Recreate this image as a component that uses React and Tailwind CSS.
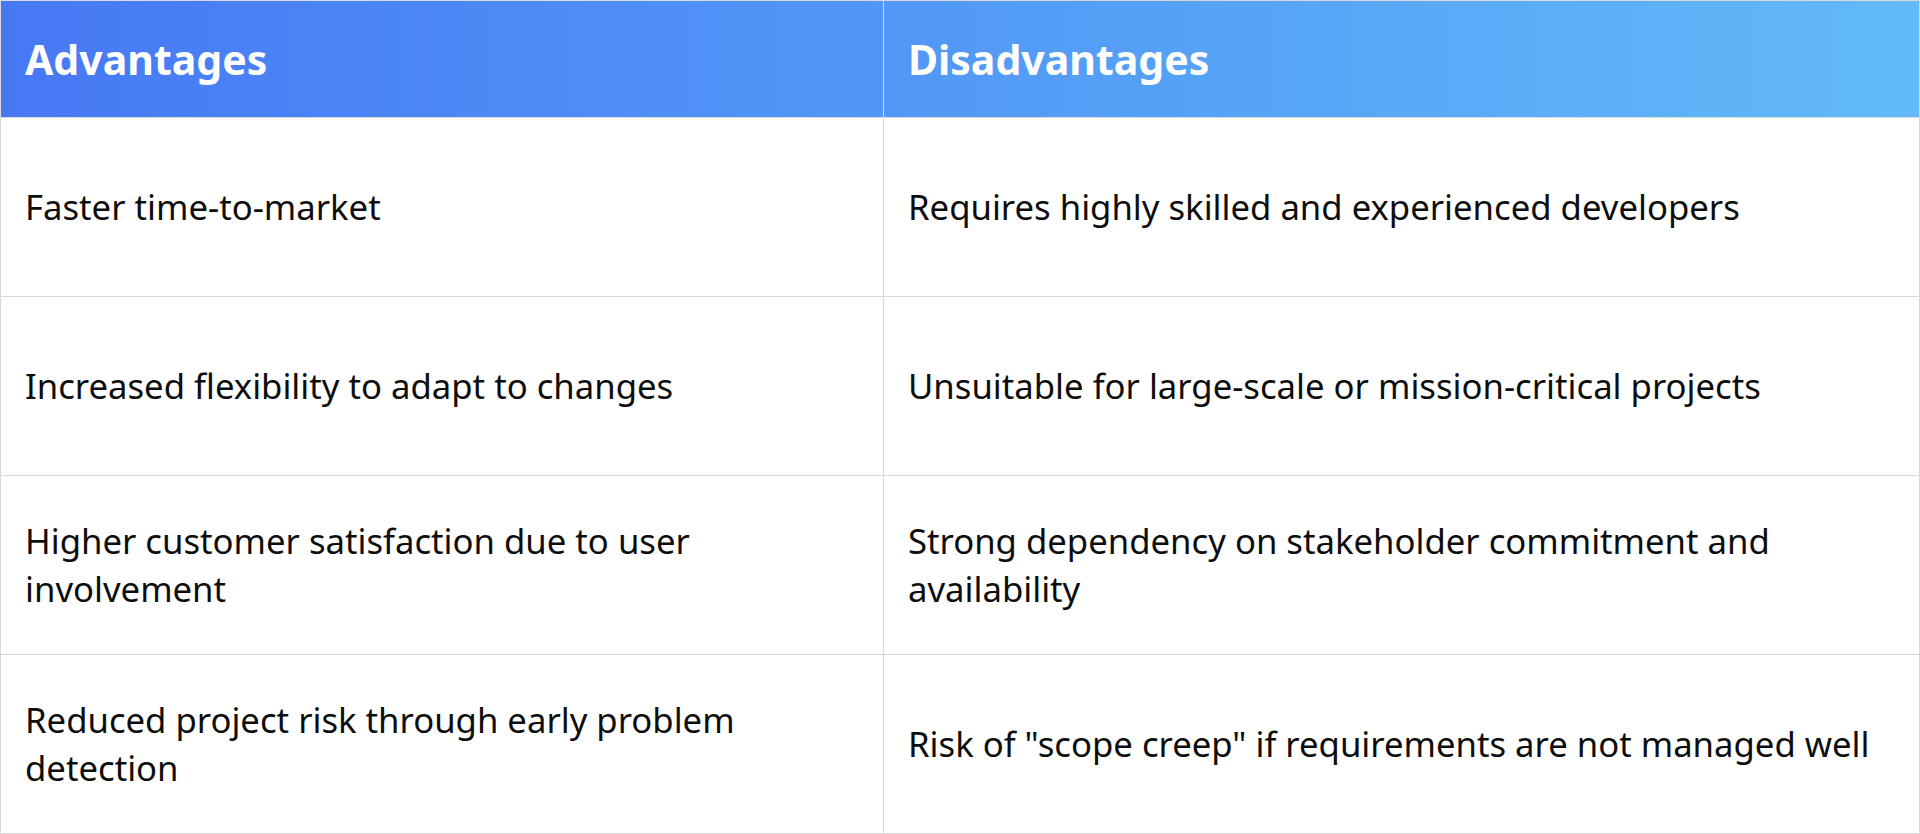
export default function App() {
  const rows = [
    ["Faster time-to-market", "Requires highly skilled and experienced developers"],
    ["Increased flexibility to adapt to changes", "Unsuitable for large-scale or mission-critical projects"],
    ["Higher customer satisfaction due to user involvement", "Strong dependency on stakeholder commitment and availability"],
    ["Reduced project risk through early problem detection", "Risk of \"scope creep\" if requirements are not managed well"],
  ];
  return (
    <div className="w-[1920px] h-[834px] bg-white font-['Noto_Sans',sans-serif]">
      <div className="h-full border border-[#d9d9d9] flex flex-col">
        <div className="h-[117px] shrink-0 flex bg-gradient-to-r from-[#4778f4] to-[#62baf8] border-b border-[#d9d9d9]">
          <div className="w-[883px] shrink-0 border-r border-[#d9d9d9] flex items-center px-6">
            <span className="text-[41px] font-bold text-white leading-none">Advantages</span>
          </div>
          <div className="flex-1 flex items-center px-6">
            <span className="text-[41px] font-bold text-white leading-none">Disadvantages</span>
          </div>
        </div>
        {rows.map((r, i) => (
          <div key={i} className={"flex flex-1 " + (i < rows.length - 1 ? "border-b border-[#d9d9d9]" : "")}>
            <div className="w-[883px] shrink-0 border-r border-[#d9d9d9] flex items-center px-6">
              <p className="text-[34.7px] leading-[48px] text-[#0d0d0d]">{r[0]}</p>
            </div>
            <div className="flex-1 flex items-center px-6">
              <p className="text-[34.7px] leading-[48px] text-[#0d0d0d]">{r[1]}</p>
            </div>
          </div>
        ))}
      </div>
    </div>
  );
}
